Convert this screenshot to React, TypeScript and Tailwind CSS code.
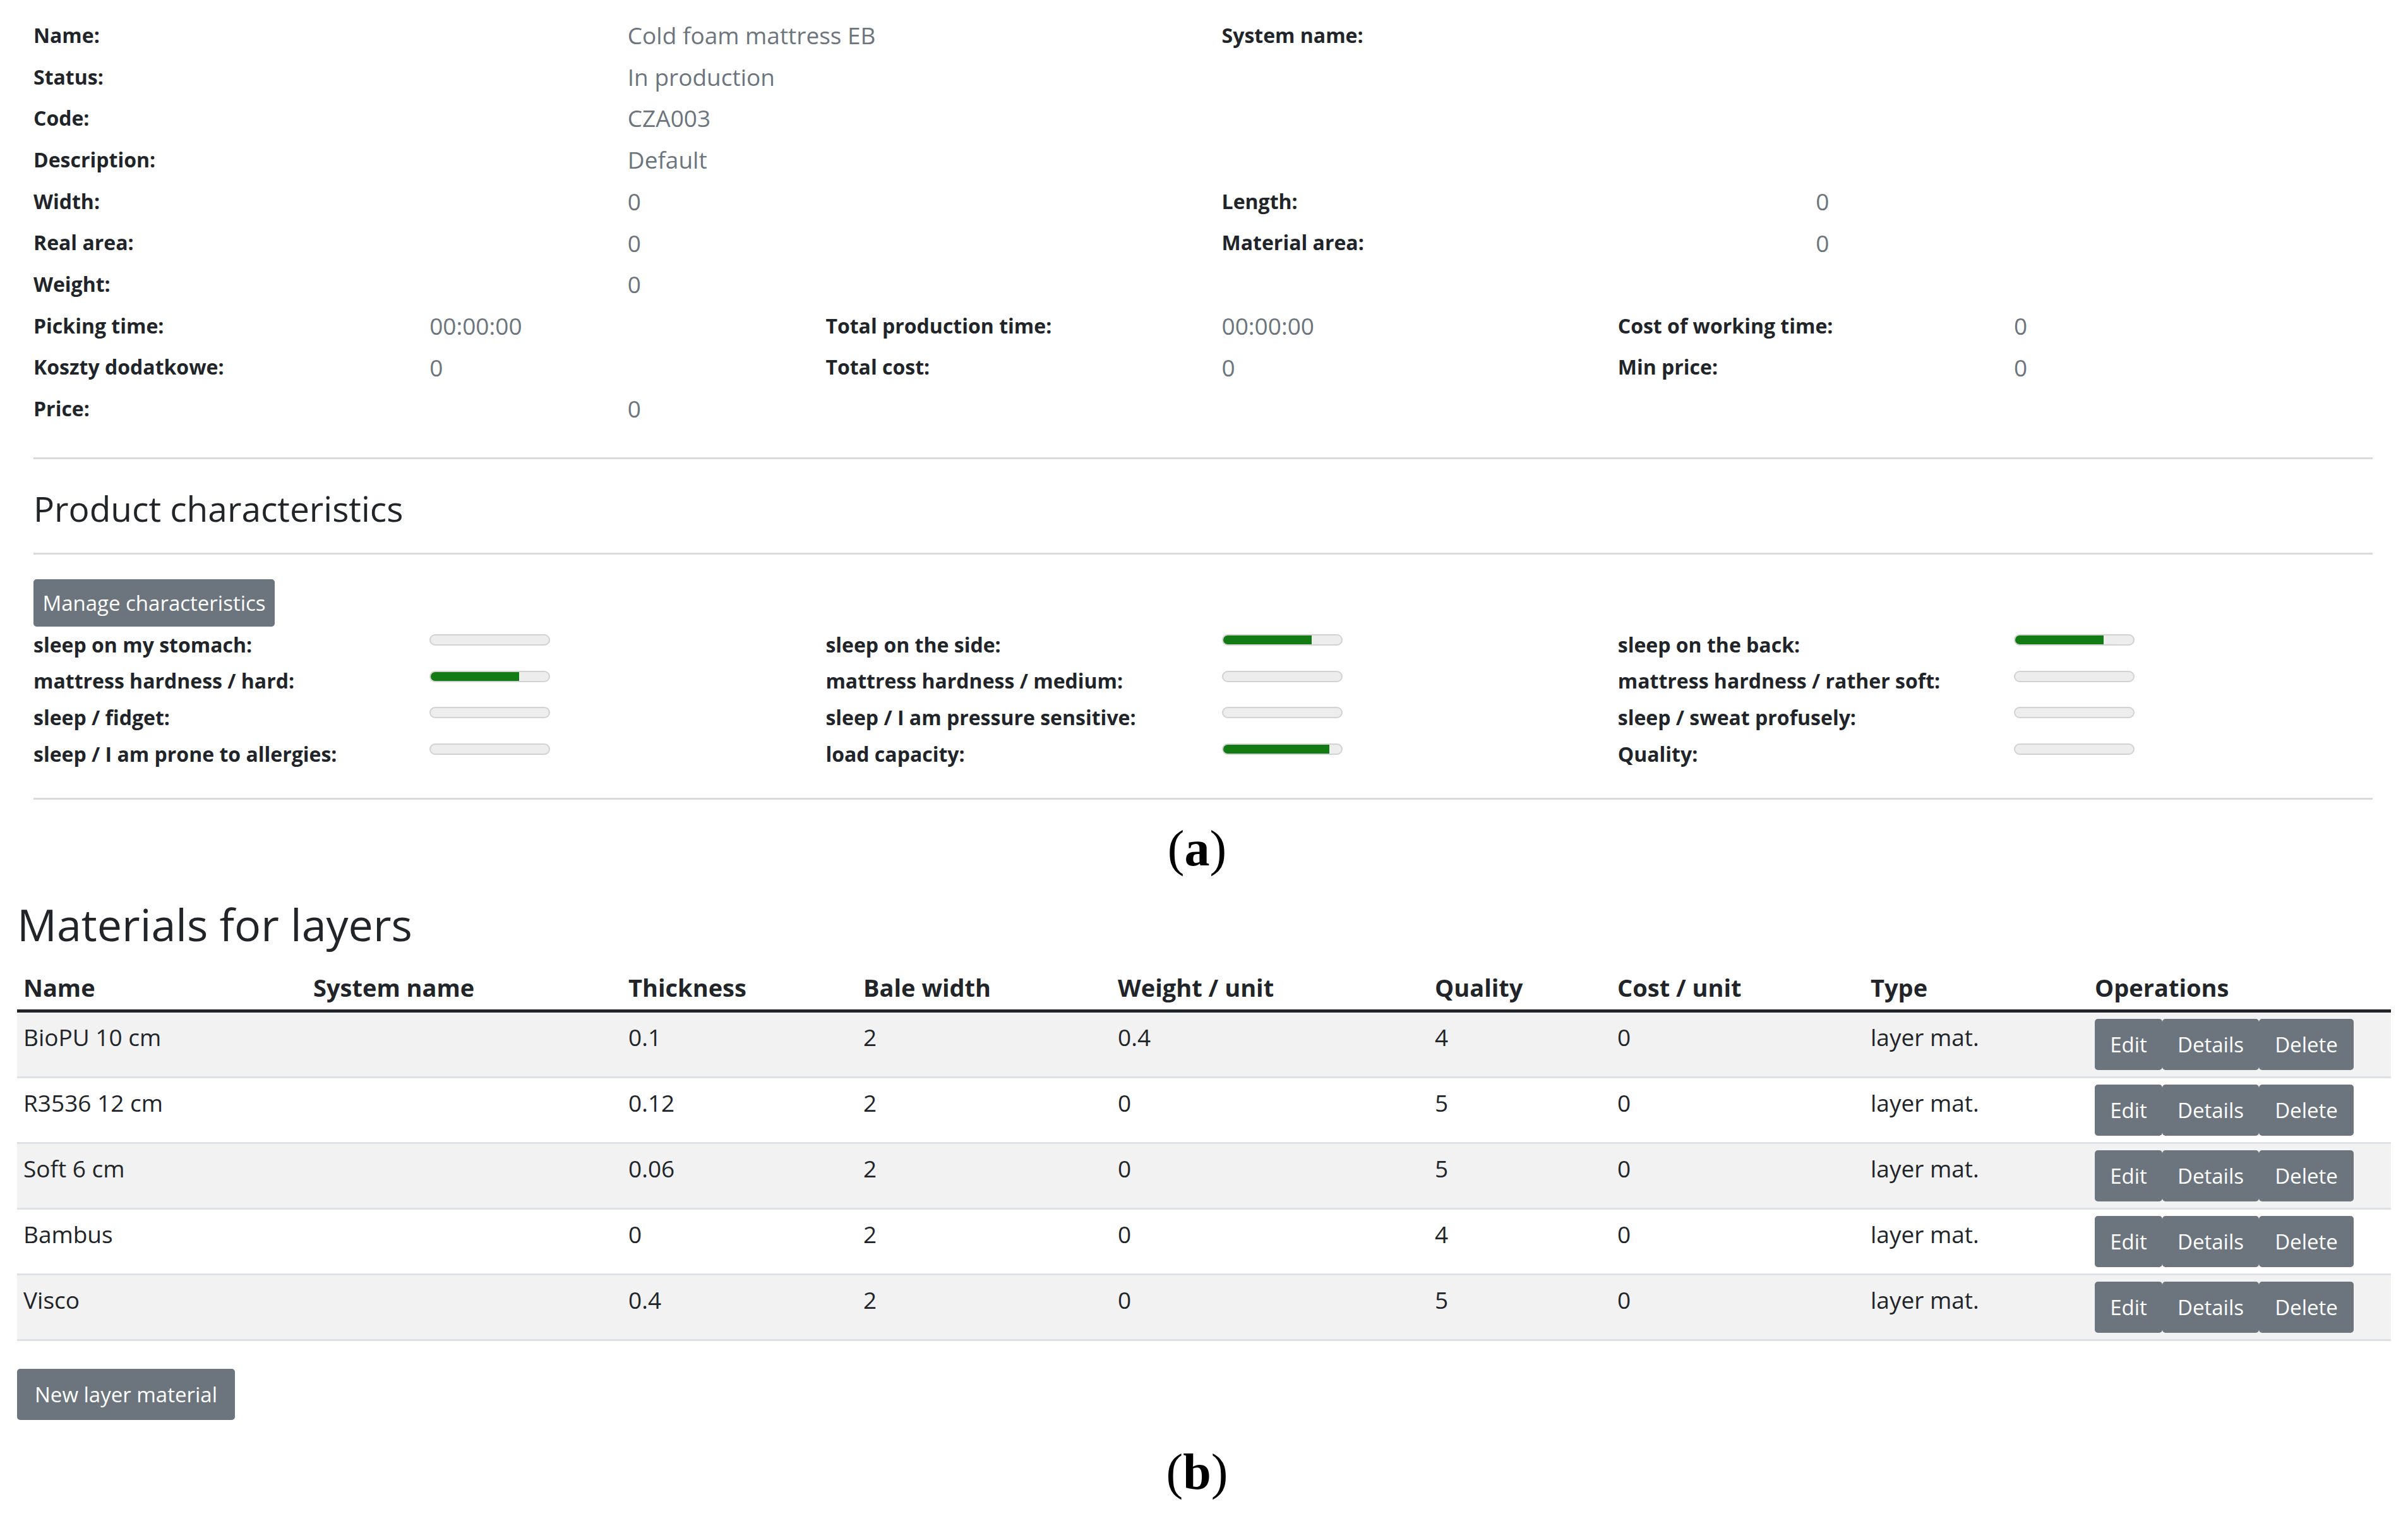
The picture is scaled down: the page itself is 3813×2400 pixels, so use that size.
import React from 'react';

// rows of the product header: labels sit at even indexes, values at odd ones
const infoRows: { span: 2 | 3; cells: string[] }[] = [
  { span: 3, cells: ['Name:', 'Cold foam mattress EB', 'System name:', ''] },
  { span: 3, cells: ['Status:', 'In production', '', ''] },
  { span: 3, cells: ['Code:', 'CZA003', '', ''] },
  { span: 3, cells: ['Description:', 'Default', '', ''] },
  { span: 3, cells: ['Width:', '0', 'Length:', '0'] },
  { span: 3, cells: ['Real area:', '0', 'Material area:', '0'] },
  { span: 3, cells: ['Weight:', '0', '', ''] },
  { span: 2, cells: ['Picking time:', '00:00:00', 'Total production time:', '00:00:00', 'Cost of working time:', '0'] },
  { span: 2, cells: ['Koszty dodatkowe:', '0', 'Total cost:', '0', 'Min price:', '0'] },
  { span: 3, cells: ['Price:', '0', '', ''] },
];

const traits: [string, number][] = [
  ['sleep on my stomach:', 0],
  ['sleep on the side:', 75],
  ['sleep on the back:', 75],
  ['mattress hardness / hard:', 75],
  ['mattress hardness / medium:', 0],
  ['mattress hardness / rather soft:', 0],
  ['sleep / fidget:', 0],
  ['sleep / I am pressure sensitive:', 0],
  ['sleep / sweat profusely:', 0],
  ['sleep / I am prone to allergies:', 0],
  ['load capacity:', 90],
  ['Quality:', 0],
];

const columns = ['Name', 'System name', 'Thickness', 'Bale width', 'Weight / unit', 'Quality', 'Cost / unit', 'Type', 'Operations'];
const colWidths = ['w-[459px]', 'w-[499px]', 'w-[372px]', 'w-[403px]', 'w-[502px]', 'w-[289px]', 'w-[401px]', 'w-[355px]', 'w-[479px]'];

const materials = [
  ['BioPU 10 cm', '', '0.1', '2', '0.4', '4', '0', 'layer mat.'],
  ['R3536 12 cm', '', '0.12', '2', '0', '5', '0', 'layer mat.'],
  ['Soft 6 cm', '', '0.06', '2', '0', '5', '0', 'layer mat.'],
  ['Bambus', '', '0', '2', '0', '4', '0', 'layer mat.'],
  ['Visco', '', '0.4', '2', '0', '5', '0', 'layer mat.'],
];

const Caption: React.FC<{ letter: string; className?: string }> = ({ letter, className = '' }) => (
  <div className={`pr-[22px] text-center text-[80px] leading-none text-black font-['Liberation_Serif','Times_New_Roman',serif] ${className}`}>
    (<span className="font-bold">{letter}</span>)
  </div>
);

const GrayButton: React.FC<{ label: string; className: string }> = ({ label, className }) => (
  <button className={`flex items-center justify-center rounded-[5px] bg-[#6c757d] text-[33px] text-white ${className}`}>
    {label}
  </button>
);

const ProgressBar: React.FC<{ value: number }> = ({ value }) => (
  <div className="mt-[12px] h-[18px] w-[191px] self-start overflow-hidden rounded-full border-2 border-[#d2d2d2] bg-[#ededed]">
    <div className="h-full bg-[#137b13]" style={{ width: `${value}%` }} />
  </div>
);

export default function App() {
  return (
    <div className="h-[2400px] w-[3813px] overflow-hidden bg-white font-['Open_Sans',sans-serif] text-[#212529]">
      {/* (a) product card */}
      <div className="pl-[53px] pr-[56px] pt-[23px]">
        <div className="grid grid-cols-[repeat(11,313.6px)_1fr] auto-rows-[65.7px] items-center">
          {infoRows.map((row, r) =>
            row.cells.map((text, i) => (
              <div
                key={`${r}-${i}`}
                className={`${row.span === 3 ? 'col-span-3' : 'col-span-2'} whitespace-nowrap ${
                  i % 2 === 0 ? 'text-[32px] font-bold' : 'text-[37px] text-[#6c757d]'
                }`}
              >
                {text}
              </div>
            ))
          )}
        </div>

        <hr className="mt-[44px] border-t-[3px] border-[#dadada]" />
        <h4 className="mt-[45px] text-[55px] font-medium leading-[1.2]">Product characteristics</h4>
        <hr className="mt-[37px] border-t-[3px] border-[#dadada]" />

        <GrayButton label="Manage characteristics" className="mt-[39px] h-[75px] w-[382px]" />

        <div className="grid grid-cols-[repeat(11,313.6px)_1fr] auto-rows-[57.7px]">
          {traits.map(([label, value]) => (
            <React.Fragment key={label}>
              <div className="col-span-2 flex items-center whitespace-nowrap text-[32px] font-bold">{label}</div>
              <div className="col-span-2 flex">
                <ProgressBar value={value} />
              </div>
            </React.Fragment>
          ))}
        </div>

        <hr className="mt-[40px] border-t-[3px] border-[#dadada]" />
      </div>

      <Caption letter="a" className="mt-[37px]" />

      {/* (b) materials table */}
      <div className="pl-[27px]">
        <h2 className="mt-[38px] text-[70px] font-medium leading-[1.2]">Materials for layers</h2>
        <table className="mt-[14px] w-[3759px] table-fixed border-collapse">
          <colgroup>
            {colWidths.map((w) => (
              <col key={w} className={w} />
            ))}
          </colgroup>
          <thead>
            <tr className="border-b-[5px] border-[#212529]">
              {columns.map((c) => (
                <th key={c} className="px-[10px] pb-[6px] pt-[16px] text-left text-[38px] font-bold leading-[57.6px]">
                  {c}
                </th>
              ))}
            </tr>
          </thead>
          <tbody>
            {materials.map((row, r) => (
              <tr key={row[0]} className={`border-b-[3px] border-[#dee2e6] ${r % 2 === 0 ? 'bg-[#f2f2f2]' : 'bg-white'}`}>
                {row.map((cell, i) => (
                  <td key={i} className="px-[10px] py-[10px] align-top text-[37px] leading-[57.6px]">
                    {cell}
                  </td>
                ))}
                <td className="px-[10px] py-[10px] align-top">
                  <div className="flex">
                    <GrayButton label="Edit" className="h-[81px] w-[107px]" />
                    <GrayButton label="Details" className="h-[81px] w-[153px]" />
                    <GrayButton label="Delete" className="h-[81px] w-[150px]" />
                  </div>
                </td>
              </tr>
            ))}
          </tbody>
        </table>

        <GrayButton label="New layer material" className="mt-[44px] h-[81px] w-[345px]" />
      </div>

      <Caption letter="b" className="mt-[42px]" />
    </div>
  );
}
